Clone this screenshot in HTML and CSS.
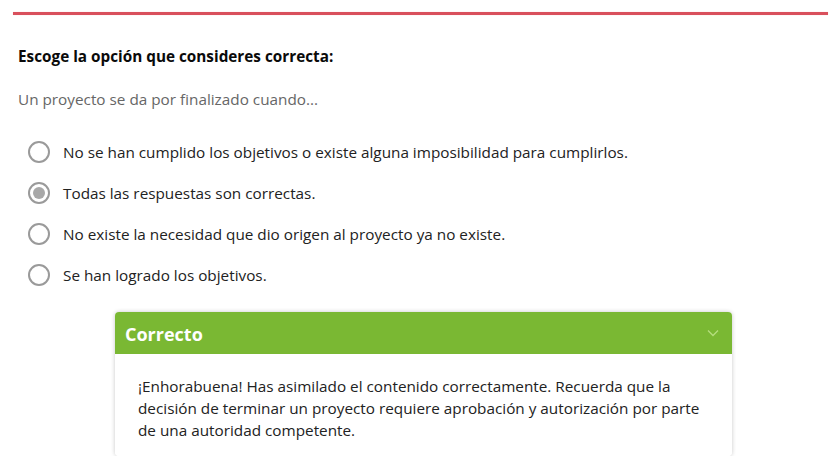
FILE: index.html
```html
<!DOCTYPE html>
<html lang="es">
<head>
<meta charset="utf-8">
<link rel="stylesheet" href="styles.css">
</head>
<body>
<div class="rule"></div>
<main class="quiz">
  <h2 class="title">Escoge la opción que consideres correcta:</h2>
  <p class="question">Un proyecto se da por finalizado cuando...</p>
  <ul class="options">
    <li class="option"><span class="radio"></span><span>No se han cumplido los objetivos o existe alguna imposibilidad para cumplirlos.</span></li>
    <li class="option selected"><span class="radio"></span><span>Todas las respuestas son correctas.</span></li>
    <li class="option"><span class="radio"></span><span>No existe la necesidad que dio origen al proyecto ya no existe.</span></li>
    <li class="option"><span class="radio"></span><span>Se han logrado los objetivos.</span></li>
  </ul>
  <section class="feedback">
    <header class="fb-head">
      <span class="fb-title">Correcto</span>
      <svg class="chev" width="12" height="8" viewBox="0 0 12 8"><path d="M1 1.5 L6 6.5 L11 1.5" fill="none" stroke="#b5de7e" stroke-width="1.3"/></svg>
    </header>
    <div class="fb-body">¡Enhorabuena! Has asimilado el contenido correctamente. Recuerda que la decisión de terminar un proyecto requiere aprobación y autorización por parte de una autoridad competente.</div>
  </section>
</main>
</body>
</html>
```
FILE: styles.css
```css
* { box-sizing: border-box; }
body {
  margin: 0;
  background: #fff;
  font-family: "Open Sans", "Noto Sans", sans-serif;
  color: #222;
}
.rule {
  margin: 12px 8px 0 13px;
  height: 3px;
  background: #d9505c;
  box-shadow: 0 0 1px #f2b5bb;
}
.quiz {
  padding: 0 18px;
}
.title {
  margin: 30px 0 0;
  font-size: 15.3px;
  font-weight: 700;
  line-height: 22px;
  color: #0a0a0a;
}
.question {
  margin: 21px 0 0;
  font-size: 15.3px;
  line-height: 22px;
  color: #666;
}
.options {
  list-style: none;
  margin: 21px 0 0;
  padding: 0 0 0 10px;
}
.option {
  display: flex;
  align-items: center;
  gap: 13px;
  height: 41px;
  font-size: 15.3px;
  color: #222;
}
.radio {
  width: 22px;
  height: 22px;
  border: 2px solid #9a9a9a;
  border-radius: 50%;
  display: flex;
  align-items: center;
  justify-content: center;
  flex-shrink: 0;
}
.selected .radio::after {
  content: "";
  width: 12px;
  height: 12px;
  border-radius: 50%;
  background: #a8a8a8;
}
.feedback {
  margin: 17px 0 0 97px;
  width: 617px;
  border-radius: 4px;
  box-shadow: 0 0 4px rgba(0,0,0,0.22);
  overflow: hidden;
}
.fb-head {
  height: 42px;
  background: #7ab833;
  display: flex;
  align-items: center;
  justify-content: space-between;
  padding: 0 13px 0 10px;
}
.fb-title {
  color: #fff;
  font-size: 18px;
  font-weight: 700;
  padding-top: 1px;
}
.fb-body {
  padding: 21px 22px 15px 23px;
  font-size: 15.3px;
  line-height: 22px;
  color: #222;
  background: #fff;
}
```
